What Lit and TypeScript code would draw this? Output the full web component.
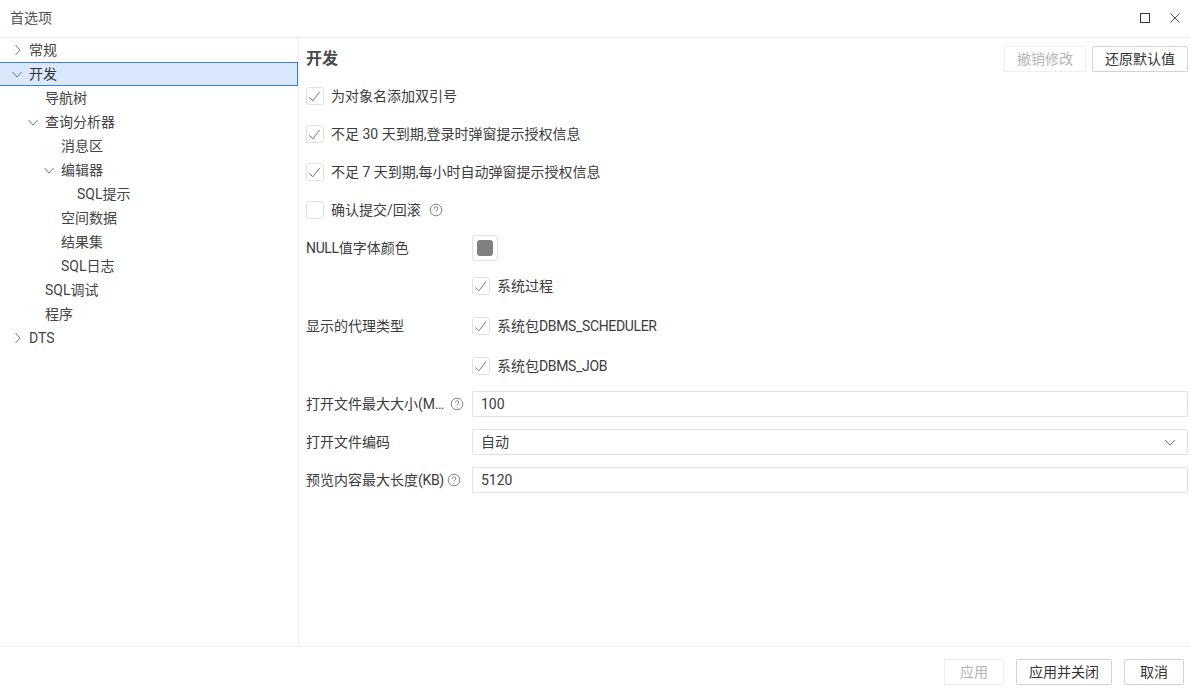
import { css, html, LitElement, svg } from 'lit'
import { customElement } from 'lit/decorators.js'
import { classMap } from 'lit/directives/class-map.js'

const chevronRight = svg`<path d="M5.5 2 L10 7 L5.5 12" />`
const chevronDown = svg`<path d="M2.5 5 L7 10 L11.5 5" />`

const treeRows = [
  { label: '常规', depth: 0, arrow: 'right' },
  { label: '开发', depth: 0, arrow: 'down', selected: true },
  { label: '导航树', depth: 1 },
  { label: '查询分析器', depth: 1, arrow: 'down' },
  { label: '消息区', depth: 2 },
  { label: '编辑器', depth: 2, arrow: 'down' },
  { label: 'SQL提示', depth: 3 },
  { label: '空间数据', depth: 2 },
  { label: '结果集', depth: 2 },
  { label: 'SQL日志', depth: 2 },
  { label: 'SQL调试', depth: 1 },
  { label: '程序', depth: 1 },
  { label: 'DTS', depth: 0, arrow: 'right' },
]

@customElement('app-root')
export class AppRoot extends LitElement {
  _help() {
    return html`<svg class="help" viewBox="0 0 14 14">
      <circle cx="7" cy="7" r="5.8" />
      <path d="M5.3 5.6 A1.75 1.75 0 1 1 7.9 7.1 C7.2 7.5 7 7.8 7 8.5" />
      <path d="M7 9.8 V10.6" />
    </svg>`
  }

  _check(checked: boolean, label: unknown) {
    return html`<div class="check">
      <span class="box">
        ${checked
          ? html`<svg viewBox="0 0 16 16"><path d="M2.3 9.3 L5.8 12.8 L12.8 3.8" /></svg>`
          : ''}
      </span>
      <span class="check_label">${label}</span>
    </div>`
  }

  _tree() {
    return treeRows.map(
      (row) => html`<div
        class=${classMap({ tree_row: true, 'tree_row--selected': !!row.selected })}
      >
        <span class="tree_indent tree_indent--${row.depth}"></span>
        <span class="tree_arrow">
          ${row.arrow
            ? html`<svg viewBox="0 0 14 14">
                ${row.arrow === 'right' ? chevronRight : chevronDown}
              </svg>`
            : ''}
        </span>
        <span>${row.label}</span>
      </div>`
    )
  }

  render() {
    return html`
      <header class="titlebar">
        <span class="titlebar_title">首选项</span>
        <span class="titlebar_actions">
          <svg viewBox="0 0 12 12"><rect x="1.5" y="1.5" width="9" height="9" /></svg>
          <svg class="close" viewBox="0 0 12 12"><path d="M1.5 1.5 L10.5 10.5 M10.5 1.5 L1.5 10.5" /></svg>
        </span>
      </header>
      <main class="body">
        <nav class="tree">${this._tree()}</nav>
        <section class="panel">
          <div class="panel_head">
            <h1>开发</h1>
            <div class="panel_buttons">
              <button class="btn btn--disabled revert">撤销修改</button>
              <button class="btn restore">还原默认值</button>
            </div>
          </div>
          <div class="row row--check">${this._check(true, '为对象名添加双引号')}</div>
          <div class="row row--check">${this._check(true, '不足 30 天到期,登录时弹窗提示授权信息')}</div>
          <div class="row row--check">${this._check(true, '不足 7 天到期,每小时自动弹窗提示授权信息')}</div>
          <div class="row row--check">
            ${this._check(false, html`确认提交/回滚 ${this._help()}`)}
          </div>
          <div class="field field--color">
            <label><span><span class="latin">NULL</span>值字体颜色</span></label>
            <span class="swatch"><i></i></span>
          </div>
          <div class="field field--proxy">
            <label>显示的代理类型</label>
            <div class="proxy_list">
              ${this._check(true, '系统过程')}
              ${this._check(true, html`<span>系统包<span class="latin">DBMS_SCHEDULER</span></span>`)}
              ${this._check(true, html`<span>系统包<span class="latin">DBMS_JOB</span></span>`)}
            </div>
          </div>
          <div class="field field--input first">
            <label><span class="clip">打开文件最大大小(MB)</span>${this._help()}</label>
            <div class="input">100</div>
          </div>
          <div class="field field--input">
            <label>打开文件编码</label>
            <div class="input input--select">
              自动
              <svg viewBox="0 0 14 14"><path d="M2 5 L7 10 L12 5" /></svg>
            </div>
          </div>
          <div class="field field--input">
            <label><span>预览内容最大长度<span class="latin">(KB)</span></span>${this._help()}</label>
            <div class="input">5120</div>
          </div>
        </section>
      </main>
      <footer class="footer">
        <button class="btn btn--disabled apply">应用</button>
        <button class="btn apply_close">应用并关闭</button>
        <button class="btn cancel">取消</button>
      </footer>
    `
  }

  static styles = css`
    :host {
      display: flex;
      flex-direction: column;
      width: 1190px;
      height: 690px;
      background: #fff;
      color: #3c3c3c;
      font-family: Roboto, 'Noto Sans CJK SC', sans-serif;
      font-size: 14px;
      line-height: 20px;
      overflow: hidden;
    }
    .latin {
      letter-spacing: -0.35px;
    }
    .titlebar {
      display: flex;
      flex: none;
      align-items: center;
      justify-content: space-between;
      box-sizing: border-box;
      height: 38px;
      padding: 0 9px 1px 10px;
      border-bottom: 1px solid #f0f0f0;
    }
    .titlebar_title {
      color: #555;
    }
    .titlebar_actions {
      display: flex;
      gap: 18px;
    }
    .titlebar_actions svg {
      width: 12px;
      height: 12px;
      fill: none;
      stroke: #333;
      stroke-width: 1;
    }
    .titlebar_actions .close {
      stroke: #555;
    }
    .body {
      display: flex;
      flex: 1;
      min-height: 0;
    }
    .tree {
      flex: none;
      box-sizing: border-box;
      width: 299px;
      border-right: 1px solid #eee;
    }
    .tree_row {
      display: flex;
      align-items: center;
      box-sizing: border-box;
      height: 24px;
      padding-left: 10px;
      color: #444;
      white-space: nowrap;
    }
    .tree_row--selected {
      border: 1px solid #3b7fe6;
      border-left: 0;
      background: #d9e8fd;
      color: #333;
    }
    .tree_indent--0 {
      width: 0;
    }
    .tree_indent--1 {
      width: 16px;
    }
    .tree_indent--2 {
      width: 32px;
    }
    .tree_indent--3 {
      width: 48px;
    }
    .tree_arrow {
      display: flex;
      flex: none;
      width: 19px;
    }
    .tree_arrow svg {
      width: 14px;
      height: 14px;
      fill: none;
      stroke: #777;
      stroke-width: 1;
    }
    .panel {
      flex: 1;
      min-width: 0;
      padding: 8px 2px 0 7px;
    }
    .panel_head {
      display: flex;
      align-items: center;
      justify-content: space-between;
      height: 26px;
      margin-bottom: 15px;
    }
    h1 {
      margin: 0;
      color: #4a4a4a;
      font-size: 16px;
      font-weight: 700;
    }
    .panel_buttons {
      display: flex;
      gap: 6px;
    }
    .btn {
      box-sizing: border-box;
      height: 26px;
      padding: 0;
      border: 1px solid #d4d4d4;
      border-radius: 2px;
      background: #fff;
      color: #333;
      font: inherit;
    }
    .btn--disabled {
      border-color: #eee;
      color: #b4b4b4;
    }
    .revert {
      width: 82px;
    }
    .restore {
      width: 96px;
    }
    .row--check {
      display: flex;
      align-items: center;
      height: 18px;
      margin-bottom: 20px;
    }
    .check {
      display: flex;
      align-items: center;
      height: 18px;
    }
    .box {
      display: block;
      flex: none;
      box-sizing: border-box;
      width: 18px;
      height: 18px;
      border: 1px solid #e2e2e2;
      border-radius: 3px;
      background: #fff;
    }
    .box svg {
      display: block;
      width: 16px;
      height: 16px;
      fill: none;
      stroke: #777;
      stroke-width: 1;
    }
    .check_label {
      display: flex;
      align-items: center;
      margin-left: 7px;
      white-space: pre;
    }
    .help {
      flex: none;
      width: 14px;
      height: 14px;
      margin-left: 5px;
      fill: none;
      stroke: #888;
      stroke-width: 1;
    }
    .field {
      display: flex;
      align-items: center;
    }
    .field label {
      display: flex;
      flex: none;
      align-items: center;
      width: 166px;
      white-space: nowrap;
    }
    .field--color {
      height: 26px;
      margin-top: -4px;
    }
    .swatch {
      display: flex;
      align-items: center;
      justify-content: center;
      box-sizing: border-box;
      width: 26px;
      height: 26px;
      border: 1px solid #e2e2e2;
      border-radius: 3px;
    }
    .swatch i {
      display: block;
      width: 16px;
      height: 16px;
      border-radius: 3px;
      background: #808080;
    }
    .field--proxy {
      margin-top: 16px;
    }
    .proxy_list {
      display: flex;
      flex-direction: column;
      gap: 22px;
    }
    .field--input {
      margin-bottom: 12px;
    }
    .field--input.first {
      margin-top: 16px;
    }
    .clip {
      overflow: hidden;
      width: 141px;
      text-overflow: ellipsis;
    }
    .field--input .clip + .help {
      margin-left: 3px;
    }
    .field--input .help {
      margin-left: 3px;
    }
    .input {
      display: flex;
      flex: 1;
      align-items: center;
      justify-content: space-between;
      box-sizing: border-box;
      height: 26px;
      padding: 0 10px 0 8px;
      border: 1px solid #e2e2e2;
      border-radius: 2px;
    }
    .input--select svg {
      width: 14px;
      height: 14px;
      fill: none;
      stroke: #777;
      stroke-width: 1;
    }
    .footer {
      display: flex;
      flex: none;
      align-items: center;
      justify-content: flex-end;
      gap: 12px;
      box-sizing: border-box;
      height: 44px;
      padding: 7px 6px 0 0;
      border-top: 1px solid #f0f0f0;
    }
    .apply {
      width: 60px;
    }
    .apply_close {
      width: 96px;
    }
    .cancel {
      width: 60px;
    }
  `
}
